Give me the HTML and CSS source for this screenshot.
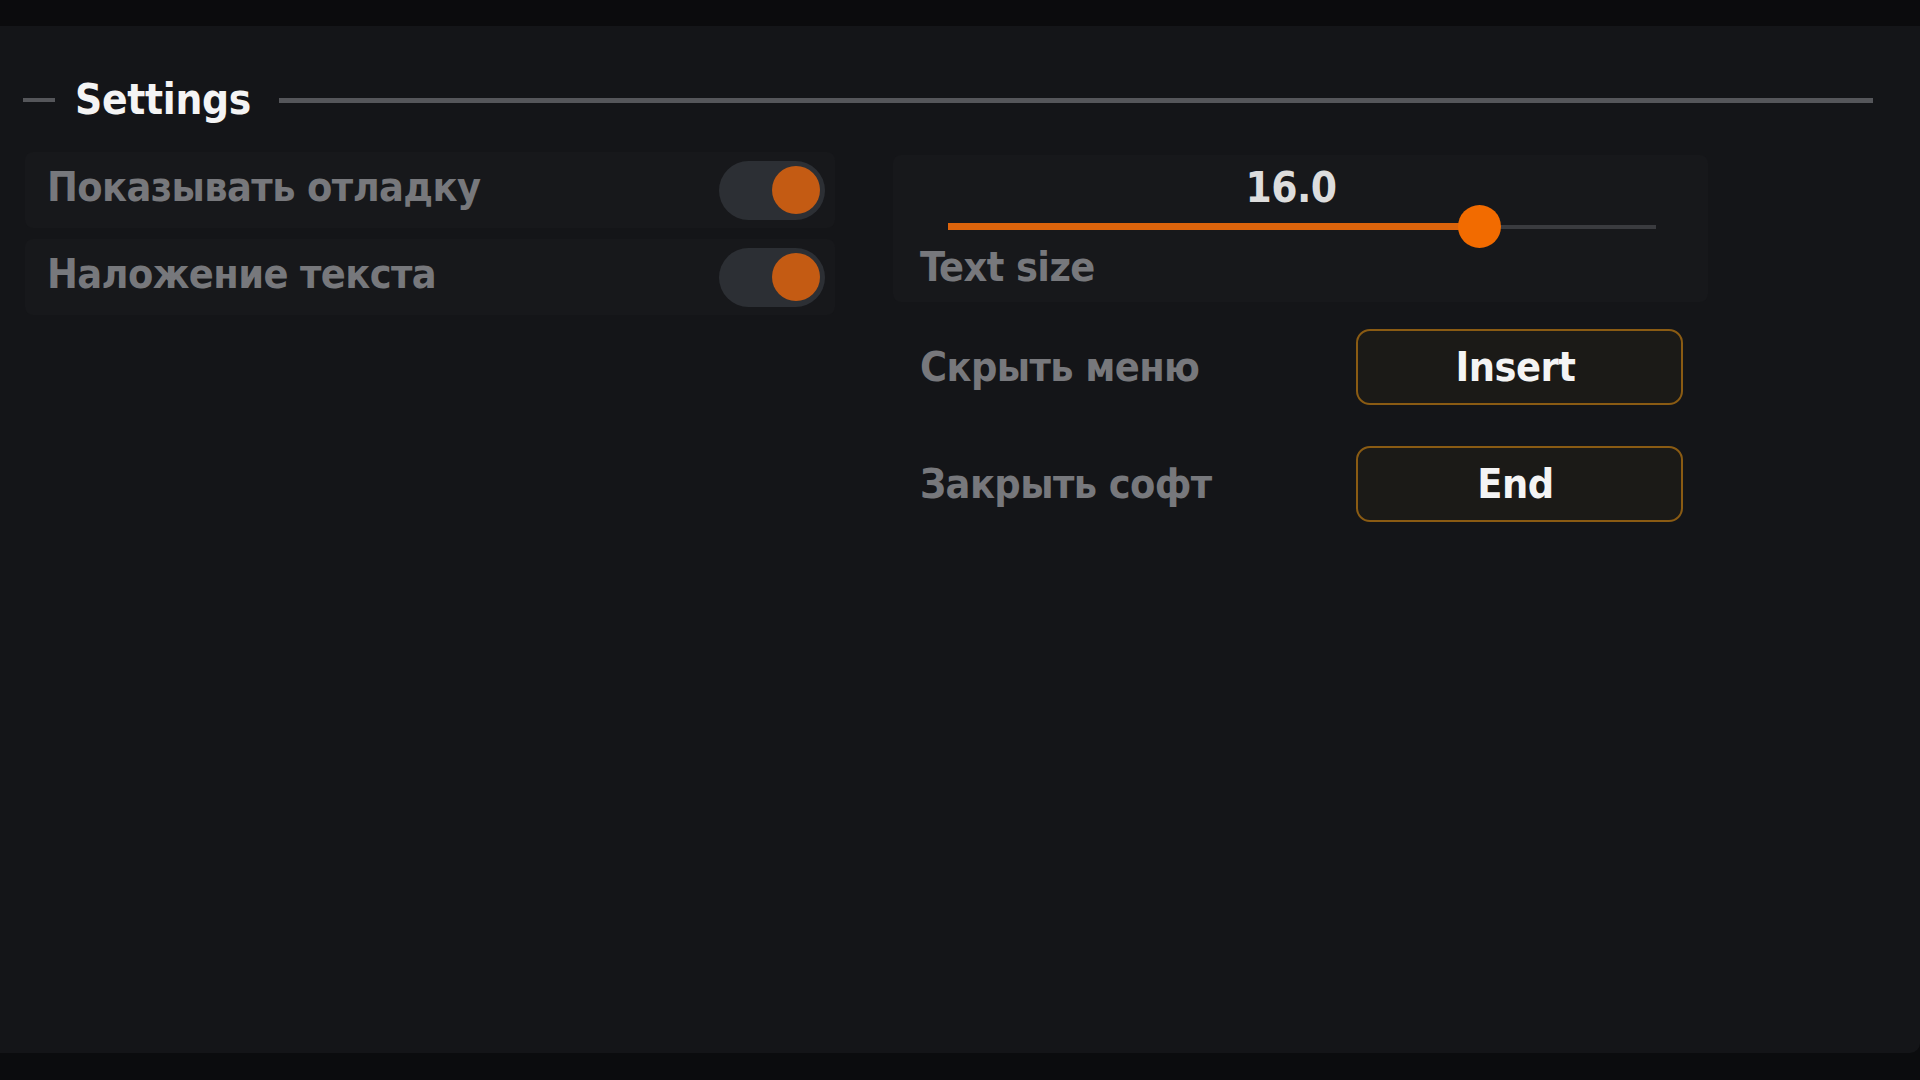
FILE: index.html
```html
<!DOCTYPE html>
<html lang="ru">
<head>
    <meta charset="UTF-8">
    <meta name="viewport" content="width=device-width, initial-scale=1.0">
    <title>Settings</title>
    <link rel="stylesheet" href="styles.css">
</head>
<body>
    <div class="topbar"></div>
    <main class="window">
        <header class="section-title">
            <span class="title-dash"></span>
            <h1>Settings</h1>
            <span class="title-line"></span>
        </header>
        <div class="columns">
            <section class="toggles">
                <div class="toggle-row">
                    <span class="label">Показывать отладку</span>
                    <span class="switch"><span class="knob"></span></span>
                </div>
                <div class="toggle-row">
                    <span class="label">Наложение текста</span>
                    <span class="switch"><span class="knob"></span></span>
                </div>
            </section>
            <section class="controls">
                <div class="slider-box">
                    <div class="slider-value">16.0</div>
                    <div class="slider">
                        <div class="slider-rail">
                            <div class="slider-fill" style="width: 75%"></div>
                        </div>
                        <div class="slider-knob" style="left: 75%"></div>
                    </div>
                    <div class="label">Text size</div>
                </div>
                <div class="bind-row">
                    <span class="label">Скрыть меню</span>
                    <button class="bind">Insert</button>
                </div>
                <div class="bind-row">
                    <span class="label">Закрыть софт</span>
                    <button class="bind">End</button>
                </div>
            </section>
        </div>
    </main>
    <div class="bottombar"></div>
</body>
</html>
```

FILE: styles.css
```css
body {
    margin: 0;
    padding: 0;
    background: #0b0c0e;
    font-family: "DejaVu Sans Condensed", "DejaVu Sans", sans-serif;
    font-stretch: condensed;
    font-weight: bold;
    overflow: hidden;
}
.topbar {
    height: 26px;
    background: #0b0b0d;
}
.bottombar {
    height: 27px;
    background: #0b0c0e;
}
.window {
    box-sizing: border-box;
    height: 1027px;
    padding: 0 47px 0 23px;
    background: #141518;
    border-bottom-right-radius: 10px;
}
.section-title {
    display: flex;
    align-items: center;
    height: 50px;
    padding-top: 49px;
}
.title-dash {
    width: 32px;
    height: 4px;
    background: #55565a;
}
.section-title h1 {
    margin: 0 28px 0 20px;
    font-size: 42px;
    line-height: 50px;
    letter-spacing: -0.3px;
    color: #f4f4f4;
}
.title-line {
    flex: 1;
    height: 5px;
    background: #55565a;
}
.columns {
    display: flex;
    gap: 58px;
    margin-top: 27px;
    padding-left: 2px;
}
.label {
    font-size: 41px;
    line-height: 41px;
    letter-spacing: -0.6px;
    color: #77787c;
}
.toggles {
    width: 810px;
    display: flex;
    flex-direction: column;
    gap: 11px;
}
.toggle-row {
    display: flex;
    align-items: center;
    justify-content: space-between;
    height: 76px;
    padding: 0 10px 0 22px;
    background: #17181b;
    border-radius: 8px;
}
.toggle-row .label {
    margin-bottom: 6px;
}
.switch {
    box-sizing: border-box;
    display: flex;
    align-items: center;
    justify-content: flex-end;
    width: 106px;
    height: 59px;
    padding: 0 5px;
    border-radius: 30px;
    background: #2c2f34;
}
.knob {
    width: 48px;
    height: 48px;
    border-radius: 50%;
    background: #c45b13;
}
.controls {
    width: 815px;
    display: flex;
    flex-direction: column;
    gap: 27px;
    padding-top: 3px;
}
.slider-box {
    height: 147px;
    box-sizing: border-box;
    padding: 12px 52px 14px 27px;
    background: #17181b;
    border-radius: 8px;
}
.slider-value {
    height: 41px;
    margin: 0 22px 0 28px;
    font-size: 42px;
    line-height: 41px;
    letter-spacing: -0.5px;
    text-align: center;
    color: #dddddd;
}
.slider {
    position: relative;
    display: flex;
    align-items: center;
    height: 43px;
    margin: -3px 0 -1px 28px;
}
.slider-rail {
    display: flex;
    align-items: center;
    width: 100%;
    height: 4px;
    background: #3a3b3f;
}
.slider-fill {
    height: 7px;
    background: #dc640c;
}
.slider-knob {
    position: absolute;
    top: 0;
    width: 43px;
    height: 43px;
    margin-left: -21px;
    border-radius: 50%;
    background: #f26b00;
}
.bind-row {
    display: grid;
    grid-template-columns: 463px 327px;
    align-items: center;
    margin-bottom: 14px;
}
.bind-row .label {
    padding-left: 27px;
}
.bind {
    height: 76px;
    padding: 0 8px 0 0;
    border: 2px solid #8a5b13;
    border-radius: 14px;
    background: #1b1a17;
    color: #f4f4f4;
    font-family: inherit;
    font-weight: bold;
    font-size: 41px;
    letter-spacing: -0.5px;
    line-height: 1;
}
```
